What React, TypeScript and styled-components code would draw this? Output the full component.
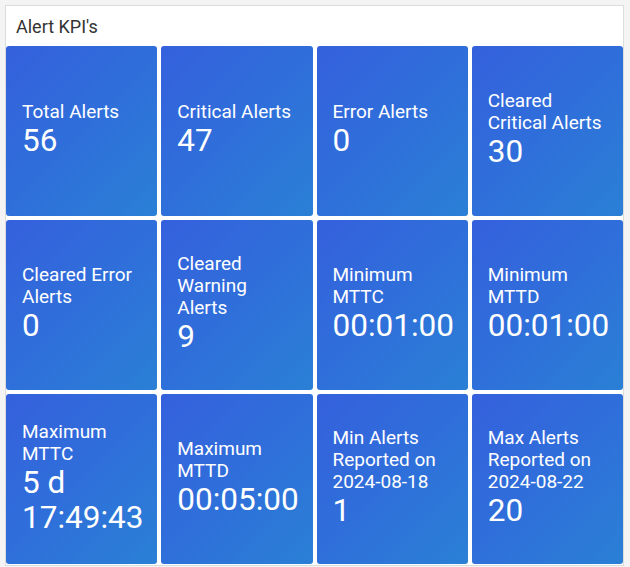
import React from 'react';
import styled, { createGlobalStyle } from 'styled-components';

const GlobalStyle = createGlobalStyle`
  body {
    margin: 0;
    background: #f4f4f4;
    font-family: Roboto, "Liberation Sans", Arial, sans-serif;
  }
`

const Panel = styled.section`
  margin: 5px;
  width: 619px;
  box-sizing: border-box;
  background: #fff;
  border: 1px solid #dcdcdc;
`

const Header = styled.div`
  height: 40px;
  display: flex;
  align-items: center;
  padding: 0 10px;
  font-size: 18px;
  color: #333;
`

const Grid = styled.div`
  display: grid;
  grid-template-columns: repeat(4, 1fr);
  grid-auto-rows: 170px;
  gap: 4px;
  padding-bottom: 1px;
`

const Tile = styled.div`
  display: flex;
  flex-direction: column;
  justify-content: center;
  padding: 0 18px 2px 16px;
  border-radius: 3px;
  background: linear-gradient(135deg, #3560dd 0%, #2f6fda 50%, #2a80d5 100%);
  color: #fff;
  overflow: hidden;
`

const Label = styled.div`
  font-size: 19px;
  line-height: 22px;
`

const Value = styled.div`
  font-size: 31.5px;
  line-height: 35.5px;
`

const kpis = [
  { label: 'Total Alerts', value: '56' },
  { label: 'Critical Alerts', value: '47' },
  { label: 'Error Alerts', value: '0' },
  { label: 'Cleared Critical Alerts', value: '30' },
  { label: 'Cleared Error Alerts', value: '0' },
  { label: 'Cleared Warning Alerts', value: '9' },
  { label: 'Minimum MTTC', value: '00:01:00' },
  { label: 'Minimum MTTD', value: '00:01:00' },
  { label: 'Maximum MTTC', value: '5 d 17:49:43' },
  { label: 'Maximum MTTD', value: '00:05:00' },
  { label: 'Min Alerts Reported on 2024-08-18', value: '1' },
  { label: 'Max Alerts Reported on 2024-08-22', value: '20' },
];

const App = () => {
  return (
    <>
      <GlobalStyle />
      <Panel>
        <Header>Alert KPI's</Header>
        <Grid>
          {kpis.map((k) => (
            <Tile key={k.label}>
              <Label>{k.label}</Label>
              <Value>{k.value}</Value>
            </Tile>
          ))}
        </Grid>
      </Panel>
    </>
  );
}

export default App;
